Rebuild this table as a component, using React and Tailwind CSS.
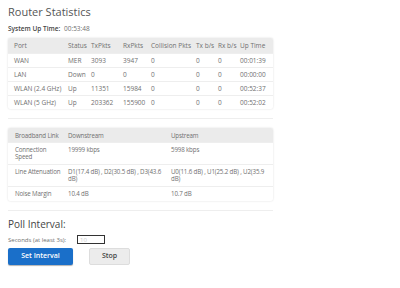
import React from "react";

const ports = [
  ["WAN", "MER", "3093", "3947", "0", "0", "0", "00:01:39"],
  ["LAN", "Down", "0", "0", "0", "0", "0", "00:00:00"],
  ["WLAN (2.4 GHz)", "Up", "11351", "15984", "0", "0", "0", "00:52:37"],
  ["WLAN (5 GHz)", "Up", "203362", "155900", "0", "0", "0", "00:52:02"],
];

const portCols = [
  ["Port", "w-[58px] pl-[6px]"],
  ["Status", "w-[24px] pl-[2px]"],
  ["TxPkts", "w-[31px] pl-[1px]"],
  ["RxPkts", "w-[28px] pl-[2px]"],
  ["Collision Pkts", "w-[45px] pl-[2px]"],
  ["Tx b/s", "w-[22px] pl-[2px]"],
  ["Rx b/s", "w-[22px] pl-[2px]"],
  ["Up Time", "pl-[2px]"],
];

const links = [
  ["Connection\nSpeed", "19999 kbps", "5998 kbps"],
  [
    "Line Attenuation",
    "D1(17.4 dB) , D2(30.5 dB) , D3(43.6 dB)",
    "U0(11.6 dB) , U1(25.2 dB) , U2(35.9 dB)",
  ],
  ["Noise Margin", "10.4 dB", "10.7 dB"],
];

function App() {
  return (
    <div className="w-[400px] h-[288px] bg-white text-[#707070] font-['Open_Sans',sans-serif] px-[8px] pt-[5px]">
      <div className="w-[265px]">
        <h1 className="text-[11px] leading-[13px] text-[#555]">Router Statistics</h1>
        <div className="flex mt-[7px] text-[6.5px] leading-[8px]">
          <span className="w-[56px] font-semibold text-[#444]">System Up Time:</span>
          <span>00:53:48</span>
        </div>

        {/* port stats */}
        <table className="w-full table-fixed mt-[5px] text-[6.5px] leading-[7px] border-collapse shadow-[0_0_2px_rgba(0,0,0,0.15)] rounded-[2px] overflow-hidden">
          <thead className="bg-[#ebebeb]">
            <tr className="h-[15px]">
              {portCols.map(([name, cls]) => (
                <th key={name} className={`${cls} text-left font-normal whitespace-nowrap`}>
                  {name}
                </th>
              ))}
            </tr>
          </thead>
          <tbody>
            {ports.map((row) => (
              <tr key={row[0]} className="h-[14px] border-t border-[#eee]">
                {row.map((cell, i) => (
                  <td key={i} className={`${portCols[i][1]} whitespace-nowrap`}>
                    {cell}
                  </td>
                ))}
              </tr>
            ))}
          </tbody>
        </table>

        <hr className="mt-[9px] border-[#eee]" />

        {/* broadband link */}
        <div className="mt-[9px] text-[6.2px] leading-[7px] tracking-[-0.15px] shadow-[0_0_2px_rgba(0,0,0,0.15)] rounded-[2px] overflow-hidden">
          <div className="grid grid-cols-[60px_103px_1fr] items-center h-[14px] bg-[#ebebeb]">
            <span className="pl-[7px] whitespace-nowrap">Broadband Link</span>
            <span>Downstream</span>
            <span>Upstream</span>
          </div>
          {links.map(([name, down, up]) => (
            <div
              key={name}
              className="grid grid-cols-[60px_103px_1fr] border-t border-[#eee] pt-[3px] pb-[4px]"
            >
              <span className="pl-[7px] pr-[2px] whitespace-pre-line">{name}</span>
              <span>{down}</span>
              <span>{up}</span>
            </div>
          ))}
        </div>

        <hr className="mt-[9px] border-[#eee]" />

        <h2 className="mt-[7px] text-[10px] leading-[12px] text-[#444]">Poll Interval:</h2>
        <div className="flex items-center mt-[5px] text-[6px] leading-[8px]">
          <span className="w-[69px]">Seconds (at least 3s):</span>
          <input
            defaultValue="10"
            className="w-[28px] h-[9px] border border-[#333] text-[6px] leading-[7px] text-[#ccc] px-[2px] py-0 outline-none"
          />
        </div>
        <div className="flex gap-[16px] mt-[4px]">
          <button className="w-[65px] h-[17px] rounded-[2px] bg-[#1a6fc9] text-white text-[7px] font-semibold shadow-[0_1px_1px_rgba(0,0,0,0.3)]">
            Set Interval
          </button>
          <button className="w-[41px] h-[17px] rounded-[2px] bg-[#ececec] text-[#444] text-[7px] font-semibold border border-[#ddd]">
            Stop
          </button>
        </div>
      </div>
    </div>
  );
}

export default App;
